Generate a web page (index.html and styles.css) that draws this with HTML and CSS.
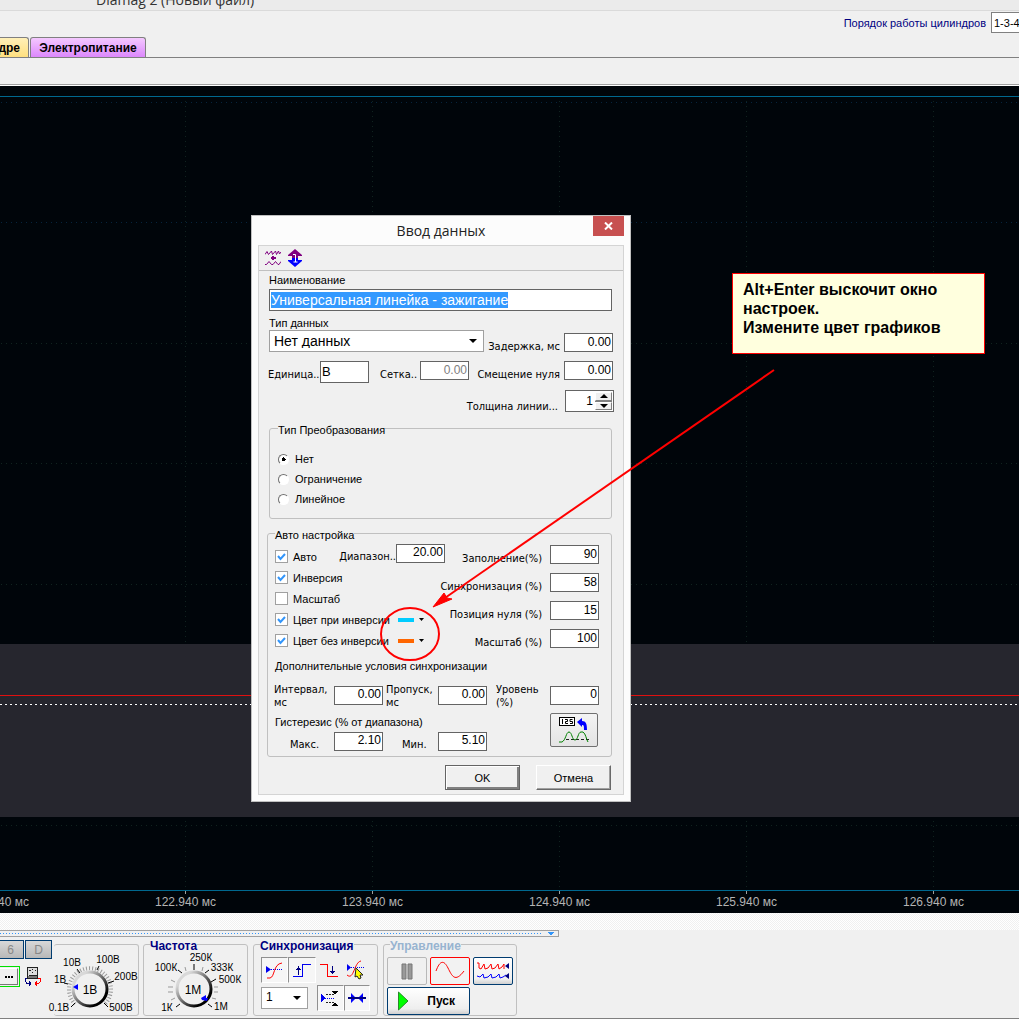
FILE: index.html
```html
<!DOCTYPE html>
<html lang="ru">
<head>
<meta charset="utf-8">
<meta name="viewport" content="width=device-width, initial-scale=1">
<title>Diamag 2 (Новый файл)</title>
<link rel="stylesheet" href="styles.css">
</head>
<body>
<main class="app">
  <header class="titlebar"><span>Diamag 2 (Новый файл)</span></header>

  <div class="topbar">
    <nav class="tabs">
      <button class="tab tab-yellow" type="button">В цилиндре</button>
      <button class="tab tab-violet" type="button">Электропитание</button>
    </nav>
    <div class="order">
      <label for="order">Порядок работы цилиндров</label>
      <input id="order" type="text" value="1-3-4-2">
    </div>
  </div>
  <div class="subbar"></div>

  <section class="chart">
    <svg class="plot" aria-hidden="true">
      <rect x="0" y="558" width="100%" height="173" fill="#26262e"/>
      <g class="grid-blue">
        <line x1="1" x2="100%" y1="16.5" y2="16.5"/>
        <line x1="1" x2="100%" y1="136.5" y2="136.5"/>
      </g>
      <g class="grid">
        <line x1="1" x2="100%" y1="257.5" y2="257.5"/>
        <line x1="1" x2="100%" y1="377.5" y2="377.5"/>
        <line x1="1" x2="100%" y1="498.5" y2="498.5"/>
        <line x1="1" x2="100%" y1="739.5" y2="739.5"/>
        <line x1="185.500" x2="185.500" y1="15" y2="558"/><line x1="185.500" x2="185.500" y1="735" y2="100%"/>
        <line x1="372.500" x2="372.500" y1="15" y2="558"/><line x1="372.500" x2="372.500" y1="735" y2="100%"/>
        <line x1="559.500" x2="559.500" y1="15" y2="558"/><line x1="559.500" x2="559.500" y1="735" y2="100%"/>
        <line x1="746.500" x2="746.500" y1="15" y2="558"/><line x1="746.500" x2="746.500" y1="735" y2="100%"/>
        <line x1="933.500" x2="933.500" y1="15" y2="558"/><line x1="933.500" x2="933.500" y1="735" y2="100%"/>
      </g>
      <rect x="0" y="10" width="100%" height="1" fill="#00688f"/>
      <rect x="0" y="609" width="100%" height="1" fill="#e01010"/>
      <line x1="0" x2="100%" y1="618.5" y2="618.5" stroke="#fff" stroke-dasharray="2 3"/>
    </svg>
    <div class="axis">
      <span>121.940 мс</span><span>122.940 мс</span><span>123.940 мс</span><span>124.940 мс</span><span>125.940 мс</span><span>126.940 мс</span>
    </div>
  </section>

  <div class="hatch"></div>
  <div class="dock-handle"><i class="dots"></i><svg width="6" height="4" viewBox="0 0 6 4"><path d="M0 0h6v1h-1v1h-1v1h-2v-1h-1v-1h-1z" fill="#3295fa"/></svg></div>

  <footer class="panel">
    <div class="channel">
      <div class="row">
        <button class="key" type="button" disabled>6</button>
        <button class="key" type="button" disabled>D</button>
      </div>
      <div class="row row-dev">
        <div class="ring"><button class="more" type="button" aria-label="Ещё"><svg width="8" height="2" viewBox="0 0 8 2"><path d="M0 0h2v2H0zM3 0h2v2H3zM6 0h2v2H6z"/></svg></button></div>
        <svg width="18" height="19" viewBox="0 0 18 19" shape-rendering="crispEdges">
          <rect x="3.500" y=".5" width="10" height="11" fill="#ddd" stroke="#222"/><path d="M5 3h2M8 2h1M11 3h1M8 5l1 1M5 8h8" stroke="#222"/><path d="M4 9h9v2H4z" fill="#777"/>
          <path d="M3 11.500H1.500v3l1 1.500h3M5.500 13.500v5M6.500 14.500v3" stroke="#000080" fill="none"/><path d="M14 11.500h2.500v3L15 16h-3M12.500 13.500v5M11.500 14.500v3" stroke="#f00" fill="none"/>
        </svg>
      </div>
    </div>

    <fieldset class="group group-volt">
      <svg class="dial" width="94" height="66" viewBox="0 0 94 66" role="img" aria-label="Диапазон 1В">
        <defs>
          <linearGradient id="rim" x1="0" y1="0" x2="1" y2="1"><stop offset=".2" stop-color="#d8d8d8"/><stop offset=".8" stop-color="#000"/></linearGradient>
        </defs>
        <path d="M29 55A21 21 0 1 1 59 55" fill="none" stroke="#999" stroke-width="4" stroke-dasharray="1 2"/>
        <path d="M29 54l-4 4M22 35l-4-1M34 24l-3-4M51 21l2-4M62 34l6-2M58 54l4 4" stroke="#000"/>
        <circle cx="44" cy="40" r="17" fill="#f0f0f0" stroke="url(#rim)" stroke-width="3"/>
        <path d="M27 38l5-3v6z" fill="#00f"/>
        <text x="44" y="45" class="big">1В</text>
        <text x="13" y="62">0.1В</text><text x="14" y="34">1В</text><text x="26" y="17">10В</text><text x="62" y="14">100В</text><text x="80" y="31">200В</text><text x="75" y="62">500В</text>
      </svg>
    </fieldset>

    <fieldset class="group group-freq">
      <legend>Частота</legend>
      <svg class="dial" width="94" height="66" viewBox="0 0 94 66" role="img" aria-label="Частота 1М">
        <path d="M27 49l-4 2M25 43h-5M25 38h-5M27 33l-4-2M38 22l-1-4M54 22l1-4M66 38h4M66 43h4M64 49l4 1" stroke="#999"/>
        <path d="M32 55l-4 3M34 24l-4-3M46 21v-6M57 24l4-3M63 33l5-3M60 55l4 3" stroke="#000"/>
        <circle cx="46" cy="40" r="17" fill="#f0f0f0" stroke="url(#rim)" stroke-width="3"/>
        <path d="M53 49l5-3v3h2l-1 3-5-1z" fill="#00f"/>
        <text x="45" y="45" class="big">1М</text>
        <text x="19" y="62">1К</text><text x="18" y="22">100К</text><text x="53" y="12">250К</text><text x="74" y="22">333К</text><text x="82" y="34">500К</text><text x="73" y="61">1М</text>
      </svg>
    </fieldset>

    <fieldset class="group group-sync">
      <legend>Синхронизация</legend>
      <div class="row">
        <button class="tool pressed" type="button" aria-label="Уровень"><svg width="17" height="18" viewBox="0 0 17 18"><path d="M0 5v7l5-3.500z" fill="#0000f0"/><path d="M5 8.500h12" stroke="#0000f0" stroke-dasharray="1 1"/><path d="M1 17h3c5-1 3-14 12-15" stroke="#f00" fill="none"/></svg></button>
        <button class="tool pressed" type="button" aria-label="Фронт"><svg width="18" height="16" viewBox="0 0 18 16" shape-rendering="crispEdges"><path d="M0 14.500h9.500V2.500H18" stroke="#0000f0" fill="none"/><path d="M5.500 4v9M3 7.500h5M4 6.500h3" stroke="#000080" fill="none"/></svg></button>
        <button class="tool" type="button" aria-label="Спад"><svg width="18" height="16" viewBox="0 0 18 16" shape-rendering="crispEdges"><path d="M0 2.500h7.500v12H18" stroke="#f00" fill="none"/><path d="M12.500 4v8M10 9.500h5M11 10.500h3" stroke="#000080" fill="none"/></svg></button>
        <button class="tool" type="button" aria-label="Выбор уровня"><svg width="20" height="20" viewBox="0 0 20 20"><path d="M1 4v7l4-3.500z" fill="#0000f0"/><path d="M5 7.500h14" stroke="#0000f0" stroke-dasharray="1 1"/><path d="M1 15c7 6 7-13 14-14" stroke="#f00" fill="none"/><path d="M10 8l7 7h-3l1 3-2 1-2-3-2 1z" fill="#ff0" stroke="#222"/></svg></button>
      </div>
      <div class="row row-sync">
        <select class="num" aria-label="Канал"><option>1</option></select>
        <button class="tool pressed" type="button" aria-label="Зона"><svg width="18" height="17" viewBox="0 0 18 17" shape-rendering="crispEdges"><path d="M0 4v8l4-4z" fill="#0000f0"/><path d="M4 8.500h10" stroke="#0000f0" stroke-dasharray="1 1"/><path d="M5 4.500h8M5 12.500h8" stroke="#222" stroke-dasharray="2 1"/><path d="M10 1h7l-3 4zM10 16h7l-3-4z" fill="#000"/></svg></button>
        <button class="tool pressed" type="button" aria-label="Сжать"><svg width="18" height="12" viewBox="0 0 18 12"><path d="M0 5h3V1l5 5-5 5V7H0z" fill="#00f"/><path d="M18 5h-3V1l-5 5 5 5V7h3z" fill="#00f"/><path d="M0 6h18" stroke="#000080" stroke-width="2"/></svg></button>
      </div>
    </fieldset>

    <fieldset class="group group-control">
      <legend class="dim">Управление</legend>
      <div class="row">
        <button class="ctl ctl-off" type="button" aria-label="Пауза" disabled><svg width="12" height="17" viewBox="0 0 12 17"><path d="M1 1h4v15H1zM7 1h4v15H7z" fill="#999" stroke="#777"/></svg></button>
        <button class="ctl ctl-red" type="button" aria-label="Синус"><svg width="30" height="20" viewBox="0 0 30 20"><path d="M1 10C5-1 9-1 13 7s7 15 16 3" stroke="#f00" fill="none"/></svg></button>
        <button class="ctl" type="button" aria-label="Каналы"><svg width="34" height="20" viewBox="0 0 34 20"><path d="M1 2h2v5l2 1 3-5 1 5 3-1 3-4 1 5 3-1 3-4 1 5 3-2 2-3v5" stroke="#f00" fill="none"/><path d="M1 15l3 1 3-3 1 4 4-1 3-3 1 4 4-1 3-3 1 4 3-1 3-2" stroke="#00f" fill="none"/><path d="M33 2v6l-4-3zM33 12v6l-4-3z" fill="#000080"/></svg></button>
      </div>
      <button class="start" type="button"><svg width="11" height="20" viewBox="0 0 11 20"><path d="M.5 1l9.500 9-9.500 9z" fill="#0f0" stroke="#2a8a2a"/></svg><span>Пуск</span></button>
    </fieldset>
  </footer>

  <section class="dialog" role="dialog" aria-labelledby="dlg-title">
    <header class="dialog-head">
      <h1 id="dlg-title">Ввод данных</h1>
      <button class="close" type="button" aria-label="Закрыть"><svg width="9" height="8" viewBox="0 0 9 8"><path d="M1 .5l7 7M8 .5l-7 7" stroke="#fff" stroke-width="2"/></svg></button>
    </header>
    <form class="dialog-body">
      <div class="dialog-tools">
        <button class="plain" type="button" aria-label="Сжать график"><svg width="16" height="16" viewBox="0 0 16 16"><path d="M0 4.500l2-3 1.500 3 3-3.500 1 3.500 3-3.500 1 3.500 2-3.500 1 3 1.500-2" stroke="#800080" fill="none"/><path d="M8 6v4M6 8h5" stroke="#800080" stroke-width="2"/><path d="M0 14.500h1.500l2.500-3 2.500 3H8l2.500-3 2.500 3h1l2-3" stroke="#800080" fill="none"/></svg></button>
        <button class="plain" type="button" aria-label="Растянуть график"><svg width="14" height="18" viewBox="0 0 14 18"><path d="M7 0l7 6v1h-4v2H4V7H0V6z" fill="#800080"/><path d="M7 18l7-6v-1h-4V9H4v2H0v1z" fill="#00f"/><path d="M5 5.500h2.500V13M5.500 13h4" stroke="#fff" fill="none"/></svg></button>
      </div>
      <div class="fields">
        <label class="caption" for="name">Наименование</label>
        <div class="box name"><input id="name" type="text" value="Универсальная линейка - зажигание" size="1"><span class="name-sel" aria-hidden="true">Универсальная линейка - зажигание</span></div>
        <label class="caption caption-type" for="type">Тип данных</label>
        <div class="line">
          <select id="type" class="type"><option>Нет данных</option></select>
          <label class="tah end" for="delay">Задержка, мс</label><input id="delay" class="num" type="text" value="0.00">
        </div>
        <div class="line line-units">
          <label class="tah" for="unit">Единица..</label><input id="unit" class="num unit" type="text" value="В">
          <label class="tah grid-label" for="mesh">Сетка..</label><input id="mesh" class="num" type="text" value="0.00" disabled>
          <label class="tah end" for="shift">Смещение нуля</label><input id="shift" class="num" type="text" value="0.00">
        </div>
        <div class="line line-thick">
          <label class="tah end" for="thick">Толщина линии...</label>
          <div class="spin"><input id="thick" type="text" value="1"><div class="spin-buttons"><button type="button" aria-label="Больше"><svg width="8" height="4" viewBox="0 0 8 4"><path d="M4 0l4 4H0z"/></svg></button><button type="button" aria-label="Меньше"><svg width="8" height="4" viewBox="0 0 8 4"><path d="M4 4L0 0h8z"/></svg></button></div></div>
        </div>

        <fieldset class="frame frame-conv">
          <legend>Тип Преобразования</legend>
          <label><input type="radio" name="conv" checked>Нет</label>
          <label><input type="radio" name="conv">Ограничение</label>
          <label><input type="radio" name="conv">Линейное</label>
        </fieldset>

        <fieldset class="frame frame-auto">
          <legend>Авто настройка</legend>
          <div class="auto">
            <div class="checks">
              <div class="check"><label><input type="checkbox" checked>Авто</label><label class="tah end" for="range">Диапазон..</label><input id="range" class="num" type="text" value="20.00"></div>
              <div class="check"><label><input type="checkbox" checked>Инверсия</label></div>
              <div class="check"><label><input type="checkbox">Масштаб</label></div>
              <div class="check"><label class="wide"><input type="checkbox" checked>Цвет при инверсии</label><button class="color cyan" type="button" aria-label="Цвет при инверсии"><i></i><svg width="5" height="3" viewBox="0 0 5 3"><path d="M0 0h5L2.500 3z"/></svg></button></div>
              <div class="check"><label class="wide"><input type="checkbox" checked>Цвет без инверсии</label><button class="color orange" type="button" aria-label="Цвет без инверсии"><i></i><svg width="5" height="3" viewBox="0 0 5 3"><path d="M0 0h5L2.500 3z"/></svg></button></div>
            </div>
            <div class="percents">
              <div class="line"><label class="tah end" for="fill">Заполнение(%)</label><input id="fill" class="num" type="text" value="90"></div>
              <div class="line"><label class="tah end" for="sync">Синхронизация (%)</label><input id="sync" class="num" type="text" value="58"></div>
              <div class="line"><label class="tah end" for="zero">Позиция нуля (%)</label><input id="zero" class="num" type="text" value="15"></div>
              <div class="line"><label class="tah end" for="scale">Масштаб (%)</label><input id="scale" class="num" type="text" value="100"></div>
            </div>
          </div>
          <p class="sub">Дополнительные условия синхронизации</p>
          <div class="extra">
            <label class="tah" for="interval">Интервал, мс</label><input id="interval" class="num" type="text" value="0.00">
            <label class="tah skip" for="skip">Пропуск, мс</label><input id="skip" class="num" type="text" value="0.00">
            <label class="tah level" for="level">Уровень (%)</label><input id="level" class="num" type="text" value="0">
            <p class="hyst">Гистерезис (% от диапазона)</p>
            <label class="tah pad" for="max">Макс.</label><input id="max" class="num" type="text" value="2.10">
            <label class="tah pad" for="min">Мин.</label><input id="min" class="num" type="text" value="5.10">
            <button class="calc" type="button" aria-label="Рассчитать"><svg width="30" height="27" viewBox="0 0 30 27"><rect x=".5" y=".5" width="15" height="8" fill="#fff" stroke="#000"/><path d="M3.500 2v5M6 2.500h2.500v2H6.500v2H9M13.500 2.500H11v2h2.500v2H11" stroke="#000" fill="none"/><path d="M18 5l5-4v3c4 0 5 3 5 9h-3c0-4 0-5-2-5v2z" fill="#00f"/><path d="M7 22.500h23" stroke="#222" stroke-dasharray="3 2"/><path d="M0 25h3c4-2 4-10 7-10s3 8 6 8 3-8 6-8h2c3 2 3 7 5 10" stroke="#008000" fill="none"/></svg></button>
          </div>
        </fieldset>

        <div class="actions">
          <button class="classic default" type="submit">OK</button>
          <button class="classic" type="button">Отмена</button>
        </div>
      </div>
    </form>
  </section>

  <aside class="note">Alt+Enter выскочит окно настроек.<br>Измените цвет графиков</aside>
  <svg class="pointer" width="400" height="300" viewBox="0 0 400 300" aria-hidden="true">
    <ellipse cx="30" cy="269" rx="29" ry="26" fill="none" stroke="#f00" stroke-width="2"/>
    <path d="M394 5L62 235" stroke="#f00" stroke-width="2"/>
    <path d="M53 242l11-14 3 5 5 1z" fill="#f00" stroke="#f00"/>
  </svg>
</main>
</body>
</html>
```
FILE: styles.css
```css
* { box-sizing: border-box; }

body {
  margin: 0;
  background: #f0f0f0;
  color: #000;
  font: 11px/14px "Liberation Sans", Arial, sans-serif;
}

button, input, select { font: inherit; color: inherit; margin: 0; padding: 0; border-radius: 0; }
button { display: flex; align-items: center; justify-content: center; border: 0; background: none; }
fieldset { margin: 0; padding: 0; min-width: 0; border: 0; }
legend { padding: 0; }
p { margin: 0; }
svg { display: block; flex: none; }

.app { position: relative; display: flex; flex-direction: column; min-height: 100vh; overflow: hidden; }
.row { display: flex; align-items: center; }

/* window frame */
.titlebar {
  display: flex; align-items: flex-end; height: 11px; padding-left: 96px; overflow: hidden;
  background: #ebebeb; border-bottom: 1px solid #dadada; color: #333;
  font: 14px/20px "Open Sans", sans-serif;
}
.topbar { display: flex; align-items: flex-end; justify-content: space-between; height: 47px; border-bottom: 1px solid #808080; }
.tabs { display: flex; gap: 1px; margin-left: -65px; }
.tab { height: 20px; border: 1px solid #808080; border-bottom: 0; border-radius: 3px 3px 0 0; font-weight: 700; font-size: 12px; }
.tab-yellow { width: 94px; padding-right: 8px; justify-content: flex-end; background: linear-gradient(#fff0b8, #ffe080); }
.tab-violet { width: 116px; background: linear-gradient(#f4c8ff, #dc88fc); }
.order { display: flex; align-items: center; align-self: flex-start; gap: 5px; margin: 1px -32px 0 0; color: #000080; }
.order label { font-size: 11px; }
.order input { width: 60px; height: 21px; padding-left: 2px; border: 1px solid #808080; background: #fff; color: #000; }
.subbar { height: 28px; border-bottom: 1px solid #fff; box-shadow: inset 0 -1px #a0a0a0; }

/* oscilloscope area */
.chart { flex: 1; display: flex; flex-direction: column; background: #00050a; overflow: hidden; }
.plot { flex: 1; width: 100%; min-height: 804px; shape-rendering: crispEdges; }
.grid { stroke: #10231f; stroke-dasharray: 1 4; }
.grid-blue { stroke: #06233c; stroke-dasharray: 1 4; }
.axis {
  display: grid; grid-auto-flow: column; grid-auto-columns: 187px; height: 23px; border-top: 1px solid #00688f;
  color: #b4b4b4; font-size: 12px; line-height: 18px; text-align: center;
}
.axis span { margin-left: -95px; margin-right: 95px; padding-top: 2px; background: linear-gradient(#a0a0a0, #a0a0a0) 50% 0 / 1px 3px no-repeat; white-space: nowrap; }

.hatch { height: 17px; background: conic-gradient(#f0f0f0 25%, #fff 0 50%, #f0f0f0 0 75%, #fff 0) 0 0 / 2px 2px; }
.dock-handle { display: flex; align-items: center; justify-content: space-between; width: 559px; height: 7px; padding-right: 4px; border: 1px solid #a0a0a0; border-left: 0; }
.dots { width: 541px; height: 1px; background: repeating-linear-gradient(90deg, #3295fa 0 1px, transparent 1px 3px); }

/* bottom control panel */
.panel { display: flex; align-items: flex-end; height: 82px; padding-bottom: 2px; border-bottom: 1px solid #808080; }
.channel { display: flex; flex-direction: column; gap: 7px; width: 57px; height: 76px; margin-left: -3px; }
.channel .row { gap: 1px; }
.channel .row-dev { gap: 4px; }
.key { width: 27px; height: 19px; border: 1px solid #003c70; background: linear-gradient(#d8d8d8, #b8b8b8); color: #888; font-size: 12px; }
.ring { width: 23px; height: 21px; padding: 1px; border: 1px solid #00e000; flex: none; }
.more { width: 100%; height: 100%; border: 1px solid; border-color: #fff #777 #777 #fff; }
.group { height: 72px; margin-right: 5px; padding: 0 7px; border: 1px solid #c0c0c0; border-radius: 3px; }
.group:has(legend) { height: 79px; }
.group legend { margin-left: -1px; padding-top: 4px; color: #000080; font-weight: 700; font-size: 12px; line-height: 10px; }
.group .dim { color: #98b4d0; }
.group-volt { width: 85px; border-left: 0; margin-right: 4px; padding: 0; }
.group-volt .dial { margin: 4px 0 0 -8px; overflow: visible; }
.group-freq { width: 105px; }
.group-freq .dial { margin: -2px 0 0 -3px; overflow: visible; }
.group-sync { width: 125px; }
.group-control { width: 134px; padding: 0 3px; }
.group-control legend { margin-left: 3px; }
.group .row { gap: 3px; padding: 6px 0 2px; }
.dial text { font-size: 10px; text-anchor: middle; }
.dial .big { font-size: 12px; }
.tool { width: 28px; height: 26px; }
.pressed { border: 1px solid; border-color: #909090 #fff #fff #909090; background: #f6f6f6; }
.group-sync .row { gap: 0; padding-bottom: 0; }
.group-sync .row-sync { padding-top: 2px; }
.row-sync .num { width: 47px; height: 22px; margin-right: 9px; padding-left: 4px; }
.ctl { width: 40px; height: 28px; border: 1px solid #003c70; border-radius: 2px; background: linear-gradient(#fff, #f0f0f0 80%, #d0d0d0); }
.ctl-red { border-color: #f00; background: #f2f2f2; }
.ctl-off { border-color: #b8b8b8; background: #f0f0f0; }
.start { width: 83px; height: 28px; padding: 0 14px 0 10px; justify-content: space-between; border: 1px solid #003c70; border-radius: 2px; background: linear-gradient(#fff, #eee 80%, #d0d0d0); font-weight: 700; font-size: 12px; }

/* settings window */
.dialog { position: absolute; left: 251px; top: 215px; width: 380px; padding: 0 6px 6px; border: 1px solid #c0c0c0; background: #fcfcfc; }
.dialog-head { display: flex; justify-content: center; height: 29px; position: relative; }
.dialog-head h1 { margin: 0; color: #222; font: 14px/30px "Open Sans", sans-serif; }
.close { position: absolute; right: 0; top: 0; width: 31px; height: 20px; background: #c75050; }
.dialog-body { border: 1px solid #d4d4d4; background: #f0f0f0; }
.dialog-tools { display: flex; align-items: center; gap: 7px; height: 25px; padding-left: 6px; border-bottom: 1px solid #c0c0c0; }
.fields { padding: 0 11px 4px 10px; }
.caption { display: block; height: 18px; line-height: 18px; }
.caption-type { height: 19px; padding-top: 3px; }
.box { height: 22px; border: 1px solid #646464; background: #fff; }
.name { display: grid; align-items: center; justify-items: start; padding: 0 1px; font-size: 14px; }
.name > * { grid-area: 1 / 1; }
.name input { width: 100%; border: 0; background: none; color: transparent; }
.name-sel { background: #3399ff; color: #fff; line-height: 16px; white-space: nowrap; }

.tah { font: 11px/13px "DejaVu Sans Condensed", "DejaVu Sans", sans-serif; white-space: nowrap; }
.line { display: flex; align-items: flex-end; height: 22px; margin-right: -1px; }
.line .end { margin: 0 4px -1px auto; }
.num { width: 49px; height: 19px; padding: 0 1px 2px; border: 1px solid #646464; background: #fff; font-size: 12px; text-align: right; flex: none; }
.num:disabled { color: #808080; }
.unit { height: 22px; font-size: 13px; text-align: left; }
select {
  appearance: none; border: 1px solid #a0a0a0;
  background: #fff url("data:image/svg+xml,%3Csvg xmlns='http://www.w3.org/2000/svg' width='8' height='4'%3E%3Cpath d='M0 0h8L4 4z'/%3E%3C/svg%3E") right 6px center no-repeat;
}
select.num { border-color: #a0a0a0; text-align: left; background: #fff url("data:image/svg+xml,%3Csvg xmlns='http://www.w3.org/2000/svg' width='8' height='4'%3E%3Cpath d='M0 0h8L4 4z'/%3E%3C/svg%3E") right 6px center no-repeat; }
.type { width: 215px; height: 22px; padding-left: 4px; font-size: 14px; }
.line-units { height: 23px; margin: 9px -1px 0 -1px; align-items: flex-start; }
.line-units .tah { padding-top: 7px; }
.line-units .unit { margin-left: 1px; }
.line-units > label:first-child { width: 51px; }
.grid-label { width: 40px; margin-left: 11px; }
.line-thick { margin-top: 6px; margin-right: -2px; }
.line-thick .end { margin-right: 7px; }
.spin { display: flex; width: 49px; height: 22px; padding: 1px; border: 1px solid #646464; background: #fff; }
.spin input { width: 28px; border: 0; padding-right: 2px; background: none; font-size: 12px; text-align: right; }
.spin-buttons { display: grid; flex: 1; gap: 1px; background: #808080; }
.spin button { background: #f0f0f0; border: 1px solid; border-color: #fff #808080 #808080 #fff; }

.frame { border: 1px solid #c0c0c0; border-radius: 3px; }
.frame legend { padding-top: 4px; line-height: 12px; }
.frame label { display: flex; align-items: center; }
.frame-conv { height: 99px; margin-top: 8px; padding: 13px 8px 0; }
.frame-conv label { height: 20px; gap: 6px; }
input[type="radio"] { appearance: none; width: 11px; height: 11px; border: 1px solid; border-color: #707070 #fff #fff #707070; border-radius: 50%; background: #fff; }
input[type="radio"]:checked { background: radial-gradient(#000 0 2px, #fff 2px); }
.frame-auto { margin: 6px 0 0 -2px; padding: 0 12px 5px 7px; }
.auto { display: flex; }
.checks { display: flex; flex-direction: column; width: 170px; padding-top: 5px; }
.check { display: flex; align-items: center; height: 21px; }
.check label:first-child { gap: 5px; white-space: nowrap; }
.check .wide { width: 123px; }
.check .end { margin: 0 0 0 auto; }
.check .num { margin-bottom: 7px; }
input[type="checkbox"] { appearance: none; width: 13px; height: 13px; border: 1px solid #a0a0a0; background: #fff; flex: none; }
input[type="checkbox"]:checked { background: #fff url("data:image/svg+xml,%3Csvg xmlns='http://www.w3.org/2000/svg' width='9' height='9'%3E%3Cpath d='M1 4l2.500 3L8 2' fill='none' stroke='%233295fa' stroke-width='2'/%3E%3C/svg%3E") center no-repeat; }
.color { gap: 5px; }
.color i { width: 16px; height: 4px; }
.cyan i { background: #00ccff; }
.orange i { background: #ff6600; }
.percents { display: flex; flex: 1; flex-direction: column; gap: 9px; min-width: 0; padding-top: 4px; }
.percents .line { height: 19px; margin: 0; justify-content: flex-end; }
.percents .end { margin-left: 0; margin-right: 8px; }
.sub { margin-top: 8px; }
.extra { display: grid; grid-template-columns: 59px 49px 55px 49px 63px 49px; align-items: center; padding-top: 8px; }
.extra .tah { display: block; white-space: normal; padding: 2px 0 0 3px; margin-left: -4px; }
.extra .skip { padding-left: 7px; }
.extra .level { padding-left: 13px; }
.extra .pad { padding: 7px 0 0 19px; }
.extra .skip ~ .pad:last-of-type { padding-left: 23px; }
.extra .hyst { grid-column: 1 / 6; height: 22px; padding-top: 6px; }
.calc { grid-area: 2 / 6 / 4 / 7; width: 48px; height: 34px; border: 1px solid #707070; border-radius: 2px; background: linear-gradient(#f4f4f4, #e4e4e4); }
.actions { display: flex; justify-content: flex-end; gap: 16px; padding: 8px 1px 0 0; }
.classic { width: 75px; height: 25px; border: 1px solid; border-color: #fff #696969 #696969 #fff; box-shadow: inset -1px -1px #a0a0a0; }
.default { border-color: #646464; box-shadow: inset 1px 1px #fff, inset -2px -2px #808080; }

/* annotation */
.note { position: absolute; left: 732px; top: 273px; width: 253px; height: 81px; padding: 6px 10px; border: 1px solid #f00; background: #ffffde; font: bold 16px/19px "Liberation Sans", Arial, sans-serif; }
.pointer { position: absolute; left: 380px; top: 365px; pointer-events: none; }
```
